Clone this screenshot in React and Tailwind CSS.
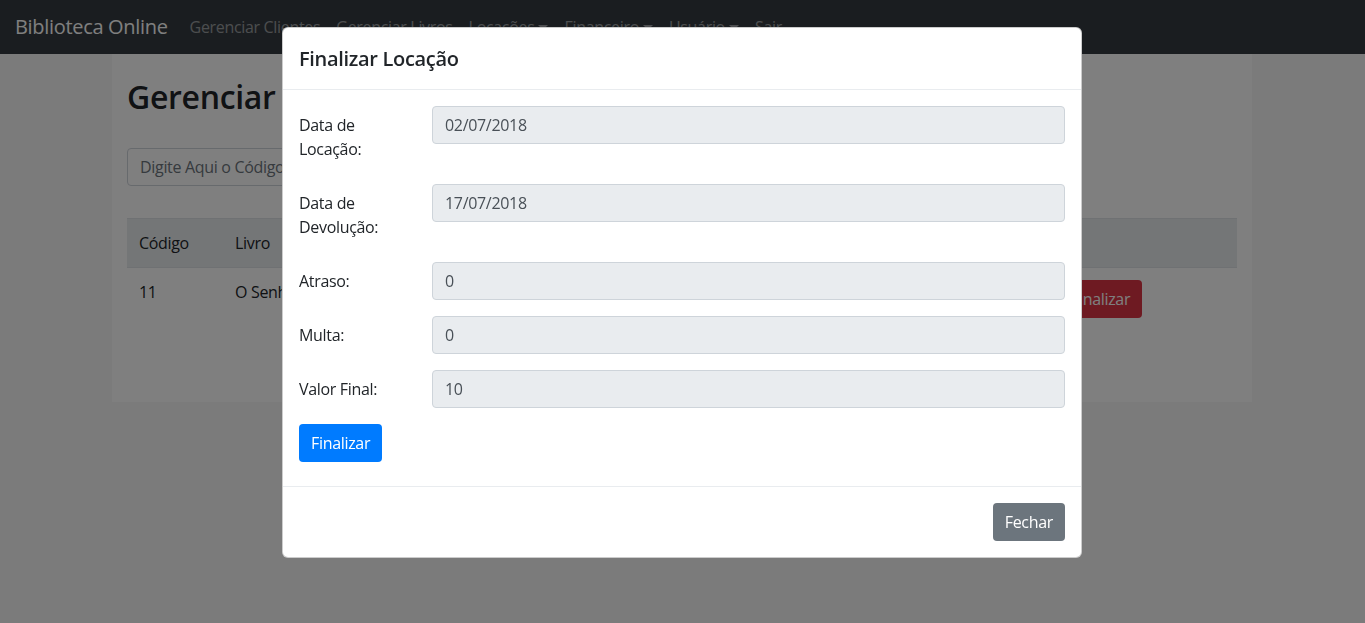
import React from 'react';

const font = { fontFamily: '"Open Sans", "Noto Sans", sans-serif' };

const Caret = () => (
  <span className="ml-[4px] inline-block align-[3px] border-x-[5px] border-t-[5px] border-x-transparent border-t-current" />
);

const Navbar = () => (
  <nav className="h-[54px] bg-[#343a40] flex items-center px-4">
    <span className="text-[20px] text-white mr-[14px] -ml-[1px]">Biblioteca Online</span>
    <ul className="flex items-center text-[16px] text-white/50">
      <li className="px-2">Gerenciar Clientes</li>
      <li className="px-2">Gerenciar Livros</li>
      <li className="px-2">Locações<Caret /></li>
      <li className="px-2">Financeiro<Caret /></li>
      <li className="px-2">Usuário<Caret /></li>
      <li className="px-2">Sair</li>
    </ul>
  </nav>
);

const Page = () => (
  <div className="w-[1140px] ml-[112px] bg-white px-[15px] pt-6 pb-[72px]">
    <h2 className="text-[32px] font-semibold leading-[1.2] text-[#212529] mb-8">Gerenciar Locações</h2>
    <input
      type="text"
      placeholder="Digite Aqui o Código da Locação"
      className="w-1/2 h-[38px] px-3 border border-[#ced4da] rounded text-[16px] placeholder-[#6c757d]"
    />
    <table className="w-full text-left text-[16px] text-[#212529] mt-8">
      <thead className="bg-[#e9ecef]">
        <tr className="border-y border-[#dee2e6]">
          <th className="p-3 font-normal">Código</th>
          <th className="p-3 font-normal">Livro</th>
          <th className="p-3 font-normal">Cliente</th>
          <th className="p-3 font-normal">Data</th>
          <th className="p-3 font-normal"></th>
        </tr>
      </thead>
      <tbody>
        <tr>
          <td className="p-3 w-[96px] align-top">11</td>
          <td className="p-3 align-top">O Senhor dos Anéis</td>
          <td className="p-3 align-top">Cliente</td>
          <td className="p-3 align-top">02/07/2018</td>
          <td className="p-3 w-[190px] align-top">
            <button className="h-[38px] px-3 rounded bg-[#dc3545] text-white">Finalizar</button>
          </td>
        </tr>
      </tbody>
    </table>
  </div>
);

const Field = ({ label, value }) => (
  <div className="flex mb-4">
    <label className="w-[133px] shrink-0 py-[7px] pr-4 leading-6">{label}</label>
    <input
      type="text"
      readOnly
      value={value}
      className="flex-1 h-[38px] px-3 bg-[#e9ecef] border border-[#ced4da] rounded text-[#495057] text-[16px] outline-none"
    />
  </div>
);

const Modal = () => (
  <div className="fixed inset-0 bg-black/50 pt-[27px]">
    <div className="w-[800px] ml-[282px] bg-white border border-black/20 rounded-md text-[#212529] text-[16px]">
      <div className="px-4 py-4 border-b border-[#e9ecef]">
        <h5 className="text-[20px] font-semibold leading-[29px]">Finalizar Locação</h5>
      </div>
      <div className="p-4 pb-6">
        <Field label={<>Data de<br />Locação:</>} value="02/07/2018" />
        <Field label={<>Data de<br />Devolução:</>} value="17/07/2018" />
        <Field label="Atraso:" value="0" />
        <Field label="Multa:" value="0" />
        <Field label="Valor Final:" value="10" />
        <button className="h-[38px] px-3 rounded bg-[#007bff] text-white">Finalizar</button>
      </div>
      <div className="p-4 border-t border-[#e9ecef] flex justify-end">
        <button className="h-[38px] px-3 rounded bg-[#6c757d] text-white">Fechar</button>
      </div>
    </div>
  </div>
);

export default function App() {
  return (
    <div className="min-h-screen bg-[#f6f6f6] tracking-[-0.02em]" style={font}>
      <Navbar />
      <Page />
      <Modal />
    </div>
  );
}
